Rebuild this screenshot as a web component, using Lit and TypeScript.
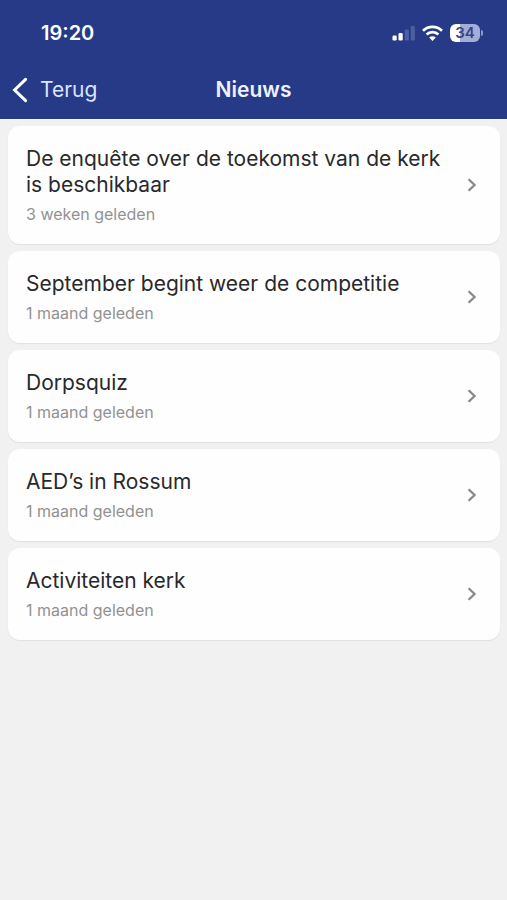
import { LitElement, html, css } from "lit";
import { customElement, property } from "lit/decorators.js";

interface NewsItem {
  title: string;
  age: string;
}

const NEWS: NewsItem[] = [
  { title: "De enquête over de toekomst van de kerk is beschikbaar", age: "3 weken geleden" },
  { title: "September begint weer de competitie", age: "1 maand geleden" },
  { title: "Dorpsquiz", age: "1 maand geleden" },
  { title: "AED’s in Rossum", age: "1 maand geleden" },
  { title: "Activiteiten kerk", age: "1 maand geleden" },
];

@customElement("status-bar")
export class StatusBar extends LitElement {
  static styles = css`
    :host {
      display: flex;
      justify-content: space-between;
      align-items: center;
      height: 66px;
      padding: 0 24px 0 41px;
      color: #fff;
    }
    .time {
      font-size: 20px;
      font-weight: 600;
      line-height: 24px;
    }
    .icons {
      display: flex;
      align-items: center;
      gap: 7px;
    }
    .icons svg {
      display: block;
    }
    .battery {
      display: flex;
      align-items: center;
      gap: 1px;
    }
    .level {
      width: 30px;
      height: 18px;
      border-radius: 6px;
      background: linear-gradient(to right, #fff 34%, #a3aed8 34%);
      color: #35457f;
      font-size: 15px;
      font-weight: 600;
      line-height: 18px;
      text-align: center;
    }
    .cap {
      width: 2px;
      height: 6px;
      border-radius: 0 2px 2px 0;
      background: #8f9bcb;
    }
  `;

  render() {
    return html`
      <span class="time">19:20</span>
      <div class="icons">
        <svg width="23" height="16" viewBox="0 0 23 16" aria-hidden="true">
          <rect x="0.5" y="10.5" width="4.2" height="5" rx="1.2" fill="#fff" />
          <rect x="6.5" y="8" width="4.2" height="7.5" rx="1.2" fill="#fff" />
          <rect x="12.7" y="4.5" width="4.2" height="11" rx="1.2" fill="#4d5ea3" />
          <rect x="18.7" y="1" width="4.2" height="14.5" rx="1.2" fill="#4d5ea3" />
        </svg>
        <svg width="21" height="16" viewBox="0 0 21 16" aria-hidden="true">
          <g fill="none" stroke="#fff" stroke-width="2.7">
            <path d="M1 5.8a13.6 13.6 0 0 1 19 0" />
            <path d="M4.6 9.5a8.4 8.4 0 0 1 11.8 0" />
          </g>
          <path d="M10.5 16 7.2 12.6a4.7 4.7 0 0 1 6.6 0z" fill="#fff" />
        </svg>
        <div class="battery">
          <div class="level">34</div>
          <div class="cap"></div>
        </div>
      </div>
    `;
  }
}

@customElement("news-card")
export class NewsCard extends LitElement {
  @property({ attribute: false }) item!: NewsItem;

  static styles = css`
    :host {
      display: block;
    }
    .card {
      display: flex;
      align-items: center;
      justify-content: space-between;
      gap: 12px;
      padding: 20px 22px 20px 18px;
      border-radius: 12px;
      background: #fefefe;
      box-shadow: 0 1px 1px #e0e0e0;
      color: #29292b;
      text-decoration: none;
    }
    .text {
      display: flex;
      flex-direction: column;
      gap: 6px;
    }
    .title {
      margin: 0;
      font-size: 21px;
      font-weight: 400;
      line-height: 26px;
    }
    .age {
      color: #929292;
      font-size: 16px;
      line-height: 20px;
    }
    .chevron {
      flex: none;
      display: block;
    }
  `;

  render() {
    return html`
      <a class="card" href="#">
        <div class="text">
          <h2 class="title">${this.item.title}</h2>
          <span class="age">${this.item.age}</span>
        </div>
        <svg class="chevron" width="12" height="14" viewBox="0 0 12 14" aria-hidden="true">
          <path d="M2.6 1.2 8.6 7 2.6 12.8" fill="none" stroke="#868686" stroke-width="2.2" />
        </svg>
      </a>
    `;
  }
}

@customElement("app-root")
export class AppRoot extends LitElement {
  static styles = css`
    :host {
      display: block;
      min-height: 100vh;
      background: #f1f1f1;
      font-family: Inter, "Liberation Sans", sans-serif;
    }
    .header {
      padding-bottom: 5px;
      border-bottom: 1px solid #f8faff;
      background: #263a88;
      color: #fff;
    }
    .nav {
      display: grid;
      grid-template-columns: 1fr auto 1fr;
      align-items: center;
      height: 48px;
      padding: 0 12px;
    }
    .back {
      display: flex;
      align-items: center;
      justify-self: start;
      gap: 12px;
      padding: 0;
      border: 0;
      background: none;
      color: #dbe3ff;
      font: inherit;
      font-size: 21px;
      line-height: 26px;
      cursor: pointer;
    }
    .heading {
      margin: 0;
      font-size: 21px;
      font-weight: 600;
      line-height: 26px;
      color: #eef2ff;
    }
    .list {
      display: flex;
      flex-direction: column;
      gap: 7px;
      margin: 0;
      padding: 6px 7px 24px 8px;
      list-style: none;
    }
  `;

  render() {
    return html`
      <header class="header">
        <status-bar></status-bar>
        <nav class="nav">
          <button class="back" type="button">
            <svg width="16" height="26" viewBox="0 0 16 26" aria-hidden="true">
              <path d="M13.6 2.4 2.6 13l11 10.6" fill="none" stroke="#fff" stroke-width="3" stroke-linecap="round" />
            </svg>
            Terug
          </button>
          <h1 class="heading">Nieuws</h1>
        </nav>
      </header>
      <main>
        <ul class="list">
          ${NEWS.map((item) => html`<li><news-card .item=${item}></news-card></li>`)}
        </ul>
      </main>
    `;
  }
}
